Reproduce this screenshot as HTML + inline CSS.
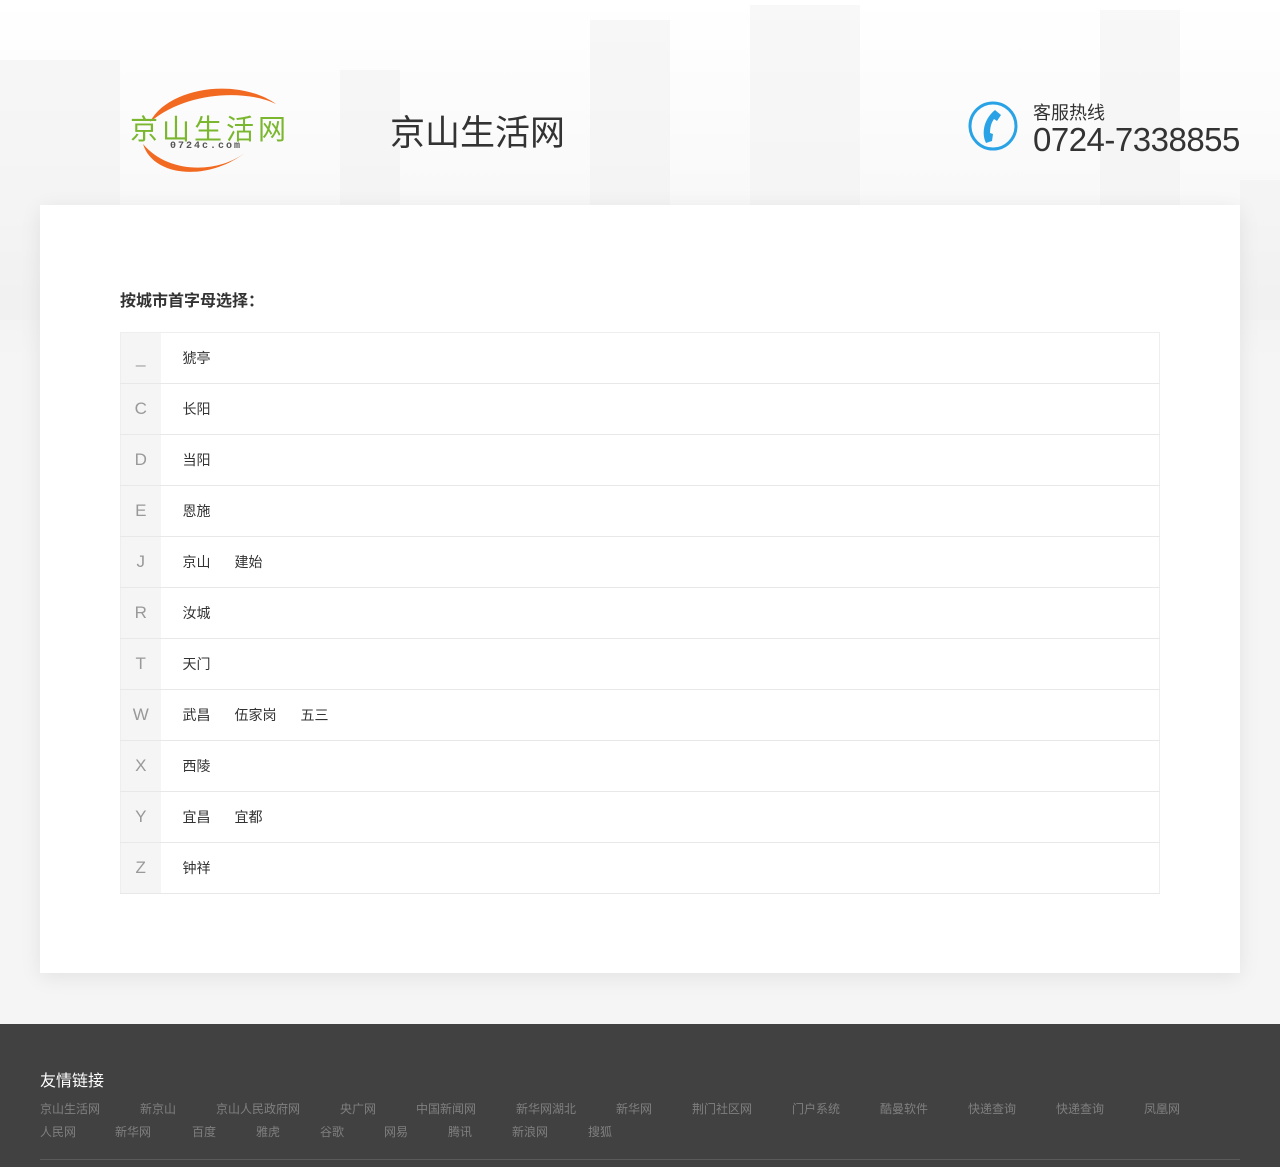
<!DOCTYPE html>
<html><head><meta charset="utf-8"><style>
*{margin:0;padding:0;box-sizing:border-box}
body{width:1280px;height:1167px;position:relative;font-family:"Liberation Sans","Noto Sans CJK SC",sans-serif;background:#f5f5f5;overflow:hidden}
.top{position:absolute;left:0;top:0;width:1280px;height:360px;background:linear-gradient(#fff 0,#f8f8f8 60%,#f2f2f2 85%,#f5f5f5 100%)}
.bld{position:absolute;background:#efefef}
.card{position:absolute;left:40px;top:205px;width:1200px;height:768px;background:#fff;box-shadow:0 4px 20px rgba(0,0,0,.08)}
h3{position:absolute;left:120px;top:287px;font-size:16px;font-weight:bold;color:#333}
table{position:absolute;left:120px;top:332px;width:1040px;border-collapse:collapse;border:1px solid #eee}
td{height:51px;border-bottom:1px solid #e8e8e8;font-size:14px;color:#333}
td.l{width:40px;background:#f5f5f5;text-align:center;color:#999;font-size:17px}
td span{margin-left:22px;margin-right:2px}
.foot{position:absolute;left:0;top:1024px;width:1280px;height:143px;background:#414141}
.ft{position:absolute;left:40px;top:1067px;color:#fff;font-size:16px}
.lk{position:absolute;font-size:12px;color:#7f7f7f;white-space:nowrap}
.hr{position:absolute;left:40px;top:1159px;width:1200px;height:1px;background:#5a5a5a}
</style></head><body>
<div class="top">
<div class="bld" style="left:0;top:60px;width:120px;height:260px;opacity:.5"></div>
<div class="bld" style="left:340px;top:70px;width:60px;height:200px;opacity:.5"></div>
<div class="bld" style="left:590px;top:20px;width:80px;height:250px;opacity:.5"></div>
<div class="bld" style="left:750px;top:5px;width:110px;height:270px;opacity:.45"></div>
<div class="bld" style="left:1100px;top:10px;width:80px;height:280px;opacity:.45"></div>
<div class="bld" style="left:1240px;top:180px;width:40px;height:140px;opacity:.5"></div>
</div>
<svg style="position:absolute;left:128px;top:82px" width="160" height="95">
<path d="M22,40 C40,5 110,-5 148,22 C120,8 60,8 22,40Z" fill="#f26a21"/>
<path d="M15,62 C25,95 80,100 118,70 C90,92 40,92 15,62Z" fill="#f26a21"/>
</svg>
<div style="position:absolute;left:130px;top:108px;font-size:28px;color:#7ab72e;letter-spacing:4px">京山生活网</div>
<div style="position:absolute;left:170px;top:141px;font-size:10px;color:#555;font-family:'Liberation Mono',monospace;letter-spacing:2px;font-weight:bold">0724c.com</div>
<div style="position:absolute;left:390px;top:105px;font-size:35px;color:#333">京山生活网</div>
<svg style="position:absolute;left:967px;top:100px" width="52" height="52"><circle cx="26" cy="26" r="23" fill="none" stroke="#2aa3e6" stroke-width="3"/><path d="M28,10 l6,5 -4,6 -3,-2 c-3,4 -4,9 -4,14 l3,1 -1,7 -6,2 c-5,-10 -2,-24 9,-33z" fill="#2aa3e6"/></svg>
<div style="position:absolute;left:1033px;top:99px;font-size:18px;color:#333">客服热线</div>
<div style="position:absolute;left:1033px;top:121px;font-size:33px;color:#333;letter-spacing:-0.5px">0724-7338855</div>
<div class="card"></div>
<h3>按城市首字母选择：</h3>
<table>
<tr><td class="l">_</td><td><span>猇亭</span></td></tr>
<tr><td class="l">C</td><td><span>长阳</span></td></tr>
<tr><td class="l">D</td><td><span>当阳</span></td></tr>
<tr><td class="l">E</td><td><span>恩施</span></td></tr>
<tr><td class="l">J</td><td><span>京山</span><span>建始</span></td></tr>
<tr><td class="l">R</td><td><span>汝城</span></td></tr>
<tr><td class="l">T</td><td><span>天门</span></td></tr>
<tr><td class="l">W</td><td><span>武昌</span><span>伍家岗</span><span>五三</span></td></tr>
<tr><td class="l">X</td><td><span>西陵</span></td></tr>
<tr><td class="l">Y</td><td><span>宜昌</span><span>宜都</span></td></tr>
<tr><td class="l">Z</td><td><span>钟祥</span></td></tr>
</table>
<div class="foot"></div>
<div class="ft">友情链接</div>
<div class="lk" style="left:40px;top:1100px">京山生活网</div>
<div class="lk" style="left:140px;top:1100px">新京山</div>
<div class="lk" style="left:216px;top:1100px">京山人民政府网</div>
<div class="lk" style="left:340px;top:1100px">央广网</div>
<div class="lk" style="left:416px;top:1100px">中国新闻网</div>
<div class="lk" style="left:516px;top:1100px">新华网湖北</div>
<div class="lk" style="left:616px;top:1100px">新华网</div>
<div class="lk" style="left:692px;top:1100px">荆门社区网</div>
<div class="lk" style="left:792px;top:1100px">门户系统</div>
<div class="lk" style="left:880px;top:1100px">酷曼软件</div>
<div class="lk" style="left:968px;top:1100px">快递查询</div>
<div class="lk" style="left:1056px;top:1100px">快递查询</div>
<div class="lk" style="left:1144px;top:1100px">凤凰网</div>
<div class="lk" style="left:40px;top:1123px">人民网</div>
<div class="lk" style="left:115px;top:1123px">新华网</div>
<div class="lk" style="left:192px;top:1123px">百度</div>
<div class="lk" style="left:256px;top:1123px">雅虎</div>
<div class="lk" style="left:320px;top:1123px">谷歌</div>
<div class="lk" style="left:384px;top:1123px">网易</div>
<div class="lk" style="left:448px;top:1123px">腾讯</div>
<div class="lk" style="left:512px;top:1123px">新浪网</div>
<div class="lk" style="left:588px;top:1123px">搜狐</div>
<div class="hr"></div>
</body></html>
